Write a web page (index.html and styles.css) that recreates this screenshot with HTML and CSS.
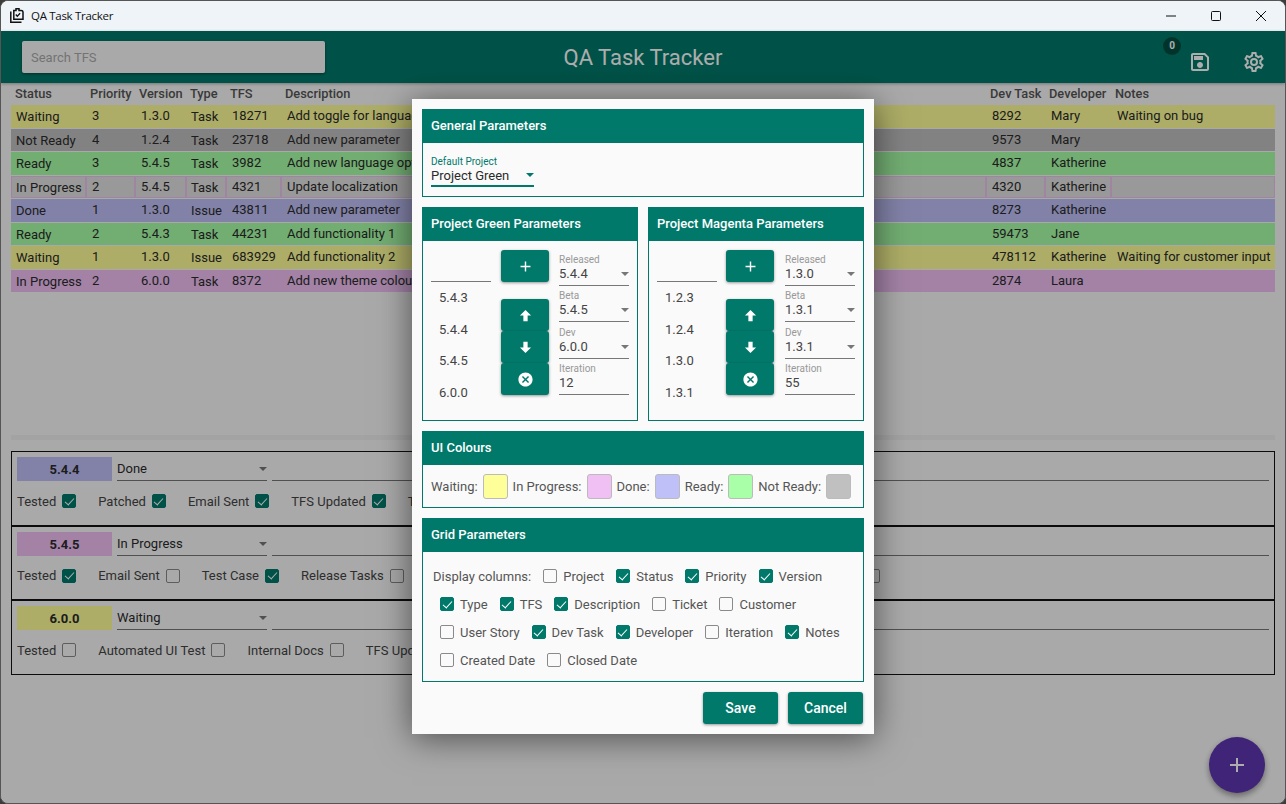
FILE: index.html
```html
<!DOCTYPE html>
<html lang="en">
<head>
    <meta charset="UTF-8">
    <title>QA Task Tracker</title>
    <link rel="stylesheet" href="styles.css">
</head>
<body>
    <svg class="defs" width="0" height="0">
        <symbol id="i-plus" viewBox="0 0 24 24"><path d="M19,13H13V19H11V13H5V11H11V5H13V11H19V13Z"/></symbol>
        <symbol id="i-up" viewBox="0 0 24 24"><path d="M15,20H9V12H4.16L12,4.16L19.84,12H15V20Z"/></symbol>
        <symbol id="i-down" viewBox="0 0 24 24"><path d="M9,4H15V12H19.84L12,19.84L4.16,12H9V4Z"/></symbol>
        <symbol id="i-close" viewBox="0 0 24 24"><path d="M12,2C17.53,2 22,6.47 22,12C22,17.53 17.53,22 12,22C6.47,22 2,17.53 2,12C2,6.47 6.47,2 12,2M15.59,7L12,10.59L8.41,7L7,8.41L10.59,12L7,15.59L8.41,17L12,13.41L15.59,17L17,15.59L13.41,12L17,8.41L15.59,7Z"/></symbol>
    </svg>

    <div class="window">
        <div class="titlebar">
            <svg class="app-icon" viewBox="0 0 15 15"><path d="M0.8 3.500v10.700h10.700" fill="none" stroke="#111" stroke-width="1.500"/><path d="M3.800 2.500h2.200v-1.700h3v1.700h2.200q1.800 0 1.800 1.500v7.200h-9.200v-7.200q0-1.500 0-1.500z" fill="none" stroke="#111" stroke-width="1.500"/><path d="M5.800 6.500l1.500 1.700 2.800-3" fill="none" stroke="#111" stroke-width="1.300"/></svg>
            <span class="app-name">QA Task Tracker</span>
            <div class="win-buttons">
                <svg viewBox="0 0 10 10"><path d="M0 5h10" stroke="#111" fill="none"/></svg>
                <svg viewBox="0 0 10 10"><rect x="0.500" y="0.500" width="9" height="9" rx="1" stroke="#111" fill="none"/></svg>
                <svg viewBox="0 0 10 10"><path d="M0 0l10 10M10 0l-10 10" stroke="#111" fill="none"/></svg>
            </div>
        </div>

        <div class="app">
            <header class="topbar">
                <div class="search">Search TFS</div>
                <h1 class="topbar-title">QA Task Tracker</h1>
                <div class="topbar-actions">
                    <div class="save-btn">
                        <span class="badge">0</span>
                        <svg viewBox="0 0 24 24"><path d="M17 3H5C3.89 3 3 3.9 3 5V19C3 20.1 3.89 21 5 21H19C20.1 21 21 20.1 21 19V7L17 3M19 19H5V5H16.17L19 7.83V19M12 12C10.34 12 9 13.34 9 15S10.34 18 12 18 15 16.66 15 15 13.66 12 12 12M6 6H15V10H6V6Z"/></svg>
                    </div>
                    <svg class="cog" viewBox="0 0 24 24"><path d="M12,8A4,4 0 0,1 16,12A4,4 0 0,1 12,16A4,4 0 0,1 8,12A4,4 0 0,1 12,8M12,10A2,2 0 0,0 10,12A2,2 0 0,0 12,14A2,2 0 0,0 14,12A2,2 0 0,0 12,10M10,22C9.75,22 9.54,21.82 9.5,21.58L9.13,18.93C8.5,18.68 7.96,18.34 7.44,17.94L4.95,18.95C4.73,19.03 4.46,18.95 4.34,18.73L2.34,15.27C2.21,15.05 2.27,14.78 2.46,14.63L4.57,12.97L4.5,12L4.57,11L2.46,9.37C2.27,9.22 2.21,8.95 2.34,8.73L4.34,5.27C4.46,5.05 4.73,4.96 4.95,5.05L7.44,6.05C7.96,5.66 8.5,5.32 9.13,5.07L9.5,2.42C9.54,2.18 9.75,2 10,2H14C14.25,2 14.46,2.18 14.5,2.42L14.87,5.07C15.5,5.32 16.04,5.66 16.56,6.05L19.05,5.05C19.27,4.96 19.54,5.05 19.66,5.27L21.66,8.73C21.79,8.95 21.73,9.22 21.54,9.37L19.43,11L19.5,12L19.43,13L21.54,14.63C21.73,14.78 21.79,15.05 21.66,15.27L19.66,18.73C19.54,18.95 19.27,19.04 19.05,18.95L16.56,17.95C16.04,18.34 15.5,18.68 14.87,18.93L14.5,21.58C14.46,21.82 14.25,22 14,22H10M11.25,4L10.88,6.61C9.68,6.86 8.62,7.5 7.85,8.39L5.44,7.35L4.69,8.65L6.8,10.2C6.4,11.37 6.4,12.64 6.8,13.8L4.68,15.36L5.43,16.66L7.86,15.62C8.63,16.5 9.68,17.14 10.87,17.38L11.24,20H12.76L13.13,17.39C14.32,17.14 15.37,16.5 16.14,15.62L18.57,16.66L19.32,15.36L17.2,13.81C17.6,12.64 17.6,11.37 17.2,10.2L19.31,8.65L18.56,7.35L16.15,8.39C15.38,7.5 14.32,6.86 13.12,6.62L12.75,4H11.25Z"/></svg>
                </div>
            </header>

            <main class="content">
                <section class="task-grid">
                    <div class="grid-head">
                        <span>Status</span><span>Priority</span><span>Version</span><span>Type</span><span>TFS</span><span>Description</span><span>Dev Task</span><span>Developer</span><span>Notes</span>
                    </div>
                    <div class="grid-row waiting"><span class="low">Waiting</span><span>3</span><span>1.3.0</span><span class="low">Task</span><span>18271</span><span>Add toggle for language</span><span>8292</span><span>Mary</span><span>Waiting on bug</span></div>
                    <div class="grid-row not-ready"><span class="low">Not Ready</span><span>4</span><span>1.2.4</span><span class="low">Task</span><span>23718</span><span>Add new parameter</span><span>9573</span><span>Mary</span><span></span></div>
                    <div class="grid-row ready"><span class="low">Ready</span><span>3</span><span>5.4.5</span><span class="low">Task</span><span>3982</span><span>Add new language option</span><span>4837</span><span>Katherine</span><span></span></div>
                    <div class="grid-row selected"><span class="low">In Progress</span><span>2</span><span>5.4.5</span><span class="low">Task</span><span>4321</span><span>Update localization</span><span>4320</span><span>Katherine</span><span></span></div>
                    <div class="grid-row done"><span class="low">Done</span><span>1</span><span>1.3.0</span><span class="low">Issue</span><span>43811</span><span>Add new parameter</span><span>8273</span><span>Katherine</span><span></span></div>
                    <div class="grid-row ready"><span class="low">Ready</span><span>2</span><span>5.4.3</span><span class="low">Task</span><span>44231</span><span>Add functionality 1</span><span>59473</span><span>Jane</span><span></span></div>
                    <div class="grid-row waiting"><span class="low">Waiting</span><span>1</span><span>1.3.0</span><span class="low">Issue</span><span>683929</span><span>Add functionality 2</span><span>478112</span><span>Katherine</span><span>Waiting for customer input</span></div>
                    <div class="grid-row in-progress"><span class="low">In Progress</span><span>2</span><span>6.0.0</span><span class="low">Task</span><span>8372</span><span>Add new theme colour</span><span>2874</span><span>Laura</span><span></span></div>
                </section>

                <div class="splitter"></div>

                <section class="release-card">
                    <div class="release-top">
                        <div class="version-tag done">5.4.4</div>
                        <div class="status-pick">Done<i class="caret"></i></div>
                        <div class="release-notes"></div>
                    </div>
                    <div class="release-checks">
                        <label class="task-check">Tested<input type="checkbox" checked></label>
                        <label class="task-check">Patched<input type="checkbox" checked></label>
                        <label class="task-check">Email Sent<input type="checkbox" checked></label>
                        <label class="task-check">TFS Updated<input type="checkbox" checked></label>
                        <label class="task-check">Test Case<input type="checkbox" checked></label>
                    </div>
                </section>
                <section class="release-card">
                    <div class="release-top">
                        <div class="version-tag in-progress">5.4.5</div>
                        <div class="status-pick">In Progress<i class="caret"></i></div>
                        <div class="release-notes"></div>
                    </div>
                    <div class="release-checks">
                        <label class="task-check">Tested<input type="checkbox" checked></label>
                        <label class="task-check">Email Sent<input type="checkbox"></label>
                        <label class="task-check">Test Case<input type="checkbox" checked></label>
                        <label class="task-check">Release Tasks<input type="checkbox"></label>
                        <input class="far-check" type="checkbox">
                    </div>
                </section>
                <section class="release-card">
                    <div class="release-top">
                        <div class="version-tag waiting">6.0.0</div>
                        <div class="status-pick">Waiting<i class="caret"></i></div>
                        <div class="release-notes"></div>
                    </div>
                    <div class="release-checks">
                        <label class="task-check">Tested<input type="checkbox"></label>
                        <label class="task-check">Automated UI Test<input type="checkbox"></label>
                        <label class="task-check">Internal Docs<input type="checkbox"></label>
                        <label class="task-check">TFS Updated<input type="checkbox"></label>
                    </div>
                </section>
            </main>

            <button class="fab"><svg><use href="#i-plus"/></svg></button>

            <!-- settings dialog and its scrim -->
            <div class="scrim">
                <div class="dialog">
                    <section class="panel panel-general">
                        <h2>General Parameters</h2>
                        <div class="panel-body">
                            <div class="project-pick">
                                <small>Default Project</small>
                                <div>Project Green<i class="caret teal"></i></div>
                            </div>
                        </div>
                    </section>

                    <div class="panel-pair">
                        <section class="panel panel-project">
                            <h2>Project Green Parameters</h2>
                            <div class="project-body">
                                <div class="version-col">
                                    <div class="version-input"></div>
                                    <div class="version-item">5.4.3</div>
                                    <div class="version-item">5.4.4</div>
                                    <div class="version-item">5.4.5</div>
                                    <div class="version-item">6.0.0</div>
                                </div>
                                <div class="button-col">
                                    <button class="icon-btn add"><svg><use href="#i-plus"/></svg></button>
                                    <div class="btn-stack">
                                        <button class="icon-btn"><svg><use href="#i-up"/></svg></button>
                                        <button class="icon-btn"><svg><use href="#i-down"/></svg></button>
                                        <button class="icon-btn"><svg><use href="#i-close"/></svg></button>
                                    </div>
                                </div>
                                <div class="pick-col">
                                    <div class="pick"><small>Released</small><div>5.4.4<i class="caret"></i></div></div>
                                    <div class="pick"><small>Beta</small><div>5.4.5<i class="caret"></i></div></div>
                                    <div class="pick"><small>Dev</small><div>6.0.0<i class="caret"></i></div></div>
                                    <div class="pick"><small>Iteration</small><div>12</div></div>
                                </div>
                            </div>
                        </section>
                        <section class="panel panel-project">
                            <h2>Project Magenta Parameters</h2>
                            <div class="project-body">
                                <div class="version-col">
                                    <div class="version-input"></div>
                                    <div class="version-item">1.2.3</div>
                                    <div class="version-item">1.2.4</div>
                                    <div class="version-item">1.3.0</div>
                                    <div class="version-item">1.3.1</div>
                                </div>
                                <div class="button-col">
                                    <button class="icon-btn add"><svg><use href="#i-plus"/></svg></button>
                                    <div class="btn-stack">
                                        <button class="icon-btn"><svg><use href="#i-up"/></svg></button>
                                        <button class="icon-btn"><svg><use href="#i-down"/></svg></button>
                                        <button class="icon-btn"><svg><use href="#i-close"/></svg></button>
                                    </div>
                                </div>
                                <div class="pick-col">
                                    <div class="pick"><small>Released</small><div>1.3.0<i class="caret"></i></div></div>
                                    <div class="pick"><small>Beta</small><div>1.3.1<i class="caret"></i></div></div>
                                    <div class="pick"><small>Dev</small><div>1.3.1<i class="caret"></i></div></div>
                                    <div class="pick"><small>Iteration</small><div>55</div></div>
                                </div>
                            </div>
                        </section>
                    </div>

                    <section class="panel panel-colours">
                        <h2>UI Colours</h2>
                        <div class="colour-row">
                            <span>Waiting:</span><i class="swatch waiting"></i>
                            <span>In Progress:</span><i class="swatch in-progress"></i>
                            <span>Done:</span><i class="swatch done"></i>
                            <span>Ready:</span><i class="swatch ready"></i>
                            <span>Not Ready:</span><i class="swatch not-ready"></i>
                        </div>
                    </section>

                    <section class="panel panel-grid">
                        <h2>Grid Parameters</h2>
                        <div class="columns-body">
                            <div class="columns-row first">
                                <span class="columns-label">Display columns:</span>
                                <label class="col-check"><input type="checkbox">Project</label>
                                <label class="col-check"><input type="checkbox" checked>Status</label>
                                <label class="col-check"><input type="checkbox" checked>Priority</label>
                                <label class="col-check"><input type="checkbox" checked>Version</label>
                            </div>
                            <div class="columns-row">
                                <label class="col-check"><input type="checkbox" checked>Type</label>
                                <label class="col-check"><input type="checkbox" checked>TFS</label>
                                <label class="col-check"><input type="checkbox" checked>Description</label>
                                <label class="col-check"><input type="checkbox">Ticket</label>
                                <label class="col-check"><input type="checkbox">Customer</label>
                            </div>
                            <div class="columns-row">
                                <label class="col-check"><input type="checkbox">User Story</label>
                                <label class="col-check"><input type="checkbox" checked>Dev Task</label>
                                <label class="col-check"><input type="checkbox" checked>Developer</label>
                                <label class="col-check"><input type="checkbox">Iteration</label>
                                <label class="col-check"><input type="checkbox" checked>Notes</label>
                            </div>
                            <div class="columns-row">
                                <label class="col-check"><input type="checkbox">Created Date</label>
                                <label class="col-check"><input type="checkbox">Closed Date</label>
                            </div>
                        </div>
                    </section>

                    <div class="dialog-actions">
                        <button class="action-btn">Save</button>
                        <button class="action-btn">Cancel</button>
                    </div>
                </div>
            </div>
        </div>
    </div>
</body>
</html>
```

FILE: styles.css
```css
* {
    box-sizing: border-box;
}

html,
body {
    margin: 0;
    height: 100%;
    background: #3c3c3c;
}

body {
    font-family: Roboto, "Liberation Sans", sans-serif;
    font-size: 13px;
    color: #2b2b2b;
    overflow: hidden;
}

.defs {
    position: absolute;
}

.window {
    height: 804px;
    display: flex;
    flex-direction: column;
    border: 1px solid #555;
    border-radius: 8px;
    overflow: hidden;
    background: #fafafa;
}

/* title bar */
.titlebar {
    height: 30px;
    flex: none;
    display: flex;
    align-items: center;
    background: #eff4f9;
    padding-left: 9px;
}

.app-icon {
    width: 15px;
    height: 15px;
    margin-top: -1px;
}

.app-name {
    margin-left: 6px;
    margin-top: -1px;
    font-family: "Open Sans", sans-serif;
    font-size: 11.500px;
    letter-spacing: -0.300px;
    color: #111;
}

.win-buttons {
    margin-left: auto;
    display: flex;
    gap: 35px;
    padding-right: 18px;
    margin-top: -1px;
    position: relative;
    left: -1px;
}

.win-buttons svg {
    width: 10px;
    height: 10px;
}

/* app */
.app {
    position: relative;
    flex: 1;
    display: flex;
    flex-direction: column;
    min-height: 0;
}

.topbar {
    height: 52px;
    flex: none;
    position: relative;
    display: flex;
    align-items: center;
    justify-content: center;
    background: #00796b;
    box-shadow: 0 1px 3px rgba(0, 0, 0, 0.3);
}

.search {
    position: absolute;
    left: 21px;
    top: 10px;
    width: 303px;
    height: 32px;
    padding: 9px;
    background: #fafafa;
    border-radius: 2px;
    color: #aaa;
    font-size: 13px;
    box-shadow: 0 1px 3px rgba(0, 0, 0, 0.4);
}

.topbar-title {
    margin: 0;
    font-size: 22px;
    font-weight: 400;
    color: #fff;
}

.topbar-actions {
    position: absolute;
    right: 20px;
    top: 21px;
    display: flex;
    align-items: flex-start;
    gap: 32px;
    fill: #fff;
}

.save-btn {
    position: relative;
    width: 20px;
    height: 20px;
}

.save-btn svg {
    display: block;
    width: 24px;
    height: 24px;
    margin: -2px;
}

.cog {
    width: 24px;
    height: 24px;
    margin-top: -2px;
    margin-right: -1px;
}

.badge {
    position: absolute;
    left: -27px;
    top: -15px;
    width: 18px;
    height: 18px;
    border-radius: 50%;
    background: #004d40;
    color: #fff;
    font-size: 10px;
    font-weight: 700;
    line-height: 18px;
    text-align: center;
}

.content {
    padding: 0 10px;
}

/* task grid */
.task-grid {
    height: 352px;
}

.grid-head,
.grid-row {
    display: grid;
    grid-template-columns: 75px 49px 51px 40px 55px 705px 59px 66px 164px;
}

.grid-head {
    height: 22px;
    align-items: center;
    padding-bottom: 2px;
    font-weight: 500;
    font-size: 12.800px;
    color: #555;
}

.grid-head span {
    padding-left: 4px;
}

.grid-row {
    height: 23.500px;
    border-bottom: 1px solid #fafafa;
}

.grid-row span {
    padding: 2px 0 0 6px;
    line-height: 17px;
    white-space: nowrap;
    overflow: hidden;
}

.grid-row span.low {
    padding: 3px 0 0 5px;
}

.grid-row.selected {
    background: #e2e2e2;
}

.grid-row.selected span {
    box-shadow: inset 0 0 0 1px #ecc4f0;
}

.waiting {
    background: #ffff99;
}

.in-progress {
    background: #f0c0f5;
}

.done {
    background: #c0c0f8;
}

.ready {
    background: #a8ffa8;
}

.not-ready {
    background: #c0c0c0;
}

.splitter {
    height: 5px;
    background: #f0f0f0;
    margin-bottom: 11px;
}

/* release cards */
.release-card {
    height: 74.500px;
    border: 1px solid #111;
    padding: 5px;
}

.release-top {
    display: flex;
    gap: 5px;
    height: 24px;
}

.version-tag {
    width: 95px;
    text-align: center;
    font-weight: 700;
    line-height: 26px;
}

.status-pick {
    width: 150px;
    position: relative;
    border-bottom: 1px solid #777;
    line-height: 23px;
}

.caret {
    position: absolute;
    right: 0;
    bottom: 11px;
    width: 0;
    height: 0;
    border: 4px solid transparent;
    border-top: 4.500px solid #777;
    border-bottom: 0;
}

.status-pick .caret {
    right: 0;
    bottom: 9px;
}

.release-notes {
    flex: 1;
    border-bottom: 1px solid #777;
}

.release-checks {
    display: flex;
    align-items: center;
    gap: 22px;
    margin-top: 12.500px;
    white-space: nowrap;
}

.task-check {
    display: flex;
    align-items: center;
    gap: 6px;
    height: 15px;
    color: #444;
}

input[type="checkbox"] {
    appearance: none;
    position: relative;
    width: 14px;
    height: 14px;
    margin: 0;
    flex: none;
    border: 1.500px solid #8a8a8a;
    border-radius: 2px;
    background: transparent;
}

input[type="checkbox"]:checked {
    background: #00796b;
    border-color: #00796b;
}

input[type="checkbox"]:checked::after {
    content: "";
    position: absolute;
    left: 3.500px;
    top: 0.500px;
    width: 4px;
    height: 8px;
    border: solid #fff;
    border-width: 0 1.500px 1.500px 0;
    transform: rotate(42deg);
}

input.far-check {
    margin-left: 440px;
}

.fab {
    position: absolute;
    right: 20px;
    bottom: 10px;
    width: 56px;
    height: 56px;
    border: 0;
    border-radius: 50%;
    background: #5e35b1;
    fill: #fff;
    box-shadow: 0 3px 6px rgba(0, 0, 0, 0.4);
    padding: 16px;
}

.fab svg {
    display: block;
    width: 24px;
    height: 24px;
}

/* dialog */
.scrim {
    position: absolute;
    inset: 0;
    display: flex;
    align-items: center;
    justify-content: center;
    padding-bottom: 1px;
    background: rgba(0, 0, 0, 0.32);
}

.dialog {
    width: 462px;
    height: 635px;
    padding: 10px 10px 0;
    display: flex;
    flex-direction: column;
    gap: 10px;
    background: #fafafa;
    box-shadow: 0 4px 32px rgba(0, 0, 0, 0.55);
}

.panel {
    border: 1px solid #00796b;
}

.panel h2 {
    margin: -1px -1px 0;
    height: 34px;
    padding: 0 9px;
    background: #00796b;
    color: #fff;
    font-size: 13px;
    font-weight: 500;
    line-height: 34px;
}

.panel-general {
    height: 88px;
    flex: none;
}

.panel-body {
    padding: 13px 8px;
}

.project-pick {
    width: 103px;
    height: 31px;
    border-bottom: 2px solid #00796b;
    position: relative;
}

.project-pick small {
    display: block;
    font-size: 10px;
    line-height: 11px;
    color: #00796b;
}

.project-pick div {
    line-height: 17px;
}

.caret.teal {
    border-top-color: #00796b;
    bottom: 8px;
}

.panel-pair {
    display: flex;
    gap: 10px;
    height: 214px;
    flex: none;
}

.panel-project {
    flex: 1;
}

.panel-project + .panel-project .button-col {
    margin: 0 1px 0 -1px;
}

.project-body {
    display: flex;
    gap: 10px;
    padding: 1px 0 0 8px;
}

.version-col {
    width: 60px;
}

.version-input {
    height: 40px;
    border-bottom: 1px solid #777;
}

.version-item {
    height: 31.700px;
    line-height: 31.700px;
    padding-left: 8px;
    color: #444;
}

.button-col {
    width: 48px;
    padding-top: 8px;
}

.icon-btn {
    display: block;
    width: 48px;
    height: 32px;
    padding: 0;
    border: 0;
    border-radius: 3px;
    background: #00796b;
    fill: #fff;
    box-shadow: 0 1px 3px rgba(0, 0, 0, 0.4);
}

.icon-btn svg {
    display: block;
    width: 17px;
    height: 17px;
    margin: 0 auto;
}

.btn-stack {
    margin-top: 17px;
}

.pick-col {
    width: 70px;
    padding-top: 12px;
}

.pick {
    position: relative;
    height: 32px;
    margin-bottom: 4.300px;
    border-bottom: 1px solid #777;
}

.pick small {
    display: block;
    font-size: 10px;
    line-height: 11px;
    color: #999;
}

.pick div {
    line-height: 17px;
    color: #444;
}

.pick .caret {
    bottom: 9px;
}

.panel-colours {
    height: 77px;
    flex: none;
}

.colour-row {
    display: flex;
    align-items: center;
    gap: 5px;
    padding: 9px 8px;
    color: #555;
}

.swatch {
    width: 25px;
    height: 25px;
    border: 1px solid #bbb;
    border-radius: 3px;
}

.panel-grid {
    height: 164px;
    flex: none;
}

.columns-body {
    padding: 10px 0 0 17px;
}

.columns-row {
    display: flex;
    align-items: center;
    gap: 12px;
    height: 28px;
    color: #555;
}

.columns-row.first {
    margin-left: -7px;
}

.col-check {
    display: flex;
    align-items: center;
    gap: 6px;
}

.dialog-actions {
    display: flex;
    justify-content: flex-end;
    gap: 10px;
    padding-right: 1px;
}

.action-btn {
    width: 75px;
    height: 32px;
    border: 0;
    border-radius: 3px;
    background: #00796b;
    color: #fff;
    font-family: Roboto, sans-serif;
    font-size: 14px;
    font-weight: 500;
    box-shadow: 0 1px 3px rgba(0, 0, 0, 0.4);
}
```
